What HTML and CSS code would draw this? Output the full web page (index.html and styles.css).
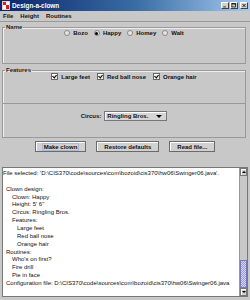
FILE: index.html
```html
<!DOCTYPE html>
<html lang="en">
<head>
  <meta charset="UTF-8">
  <title>Design-a-clown</title>
  <link rel="stylesheet" href="styles.css">
</head>
<body>
  <div class="window">
    <!-- Title bar -->
    <div class="titlebar">
      <svg class="app-icon" width="8" height="9" viewBox="0 0 8 9">
        <rect x="0" y="0" width="8" height="9" fill="#f2c8c8"/>
        <rect x="1" y="1" width="3" height="3" fill="#d02020"/>
        <rect x="4" y="4" width="3" height="4" fill="#d02020"/>
        <rect x="4" y="1" width="3" height="3" fill="#ffffff"/>
        <rect x="1" y="4" width="3" height="4" fill="#ffffff"/>
      </svg>
      <span class="title">Design-a-clown</span>
      <div class="title-buttons">
        <span class="tbtn">
          <svg width="7" height="7" viewBox="0 0 7 7"><rect x="1" y="5" width="4" height="1" fill="#000"/></svg>
        </span>
        <span class="tbtn">
          <svg width="7" height="7" viewBox="0 0 7 7"><rect x="1" y="1" width="5" height="5" fill="none" stroke="#000" stroke-width="1" transform="translate(-0.5,-0.5)"/><rect x="1" y="1" width="5" height="1" fill="#000"/></svg>
        </span>
        <span class="tbtn close">
          <svg width="7" height="7" viewBox="0 0 7 7"><path d="M1.5 1.5 L5.5 5.5 M5.5 1.5 L1.5 5.5" stroke="#000" stroke-width="1.2"/></svg>
        </span>
      </div>
    </div>

    <!-- Menu bar -->
    <div class="menubar">
      <span>File</span>
      <span>Height</span>
      <span>Routines</span>
    </div>

    <div class="content">
      <fieldset class="group name-group">
        <legend>Name</legend>
        <div class="options">
          <label class="option"><span class="radio"></span>Bozo</label>
          <label class="option"><span class="radio on"></span>Happy</label>
          <label class="option"><span class="radio"></span>Homey</label>
          <label class="option"><span class="radio"></span>Walt</label>
        </div>
      </fieldset>

      <fieldset class="group features-group">
        <legend>Features</legend>
        <div class="options">
          <label class="option"><span class="check"></span>Large feet</label>
          <label class="option"><span class="check"></span>Red ball nose</label>
          <label class="option"><span class="check"></span>Orange hair</label>
        </div>
      </fieldset>

      <div class="circus-panel">
        <span class="circus-label">Circus:</span>
        <div class="combo">
          <span>Ringling Bros.</span>
          <span class="combo-arrow"></span>
        </div>
      </div>

      <div class="button-row">
        <button class="btn focused"><span>Make clown</span></button>
        <button class="btn"><span>Restore defaults</span></button>
        <button class="btn"><span>Read file...</span></button>
      </div>

      <div class="output">
        <div class="log">
          <div class="line">File selected: 'D:\CIS370\code\sources\com\bozoid\cis370\hw06\Swinger06.java'.</div>
          <div class="line">&nbsp;</div>
          <div class="line l0">Clown design:</div>
          <div class="line l1">Clown: Happy</div>
          <div class="line l1">Height: 5' 6"</div>
          <div class="line l1">Circus: Ringling Bros.</div>
          <div class="line l1">Features:</div>
          <div class="line l2">Large feet</div>
          <div class="line l2">Red ball nose</div>
          <div class="line l2">Orange hair</div>
          <div class="line l0">Routines:</div>
          <div class="line l1">Who's on first?</div>
          <div class="line l1">Fire drill</div>
          <div class="line l1">Pie in face</div>
          <div class="line l0">Configuration file: D:\CIS370\code\sources\com\bozoid\cis370\hw06\Swinger06.java</div>
        </div>
        <div class="scrollbar">
          <span class="sb-btn up"></span>
          <div class="sb-track"><span class="sb-thumb"></span></div>
          <span class="sb-btn down"></span>
        </div>
      </div>
    </div>
  </div>
</body>
</html>
```

FILE: styles.css
```css
* {
  margin: 0;
  padding: 0;
  box-sizing: border-box;
  font-family: 'Liberation Sans', Arial, sans-serif;
}

body {
  width: 250px;
  height: 300px;
  background: #c8c8c8;
  overflow: hidden;
}

.window {
  height: 300px;
  display: flex;
  flex-direction: column;
}

/* Title bar */
.titlebar {
  height: 12px;
  display: flex;
  align-items: center;
  padding: 0 2px 0 2px;
  background: linear-gradient(to right, #0a246a, #3a6ea5 55%, #a6caf0);
}

.app-icon {
  margin-right: 2px;
}

.title {
  color: white;
  font-size: 6.4px;
  font-weight: bold;
}

.title-buttons {
  margin-left: auto;
  display: flex;
  gap: 1px;
}

.tbtn {
  width: 8px;
  height: 7px;
  background: #d4d0c8;
  border: 1px solid;
  border-color: #fff #404040 #404040 #fff;
  display: flex;
  align-items: center;
  justify-content: center;
}

.tbtn svg {
  width: 6px;
  height: 5px;
}

.tbtn.close {
  margin-left: 1px;
}

/* Menu bar */
.menubar {
  height: 11px;
  display: flex;
  align-items: center;
  gap: 7px;
  padding-left: 3px;
  font-size: 6px;
  font-weight: bold;
  color: #111;
  border-bottom: 1px solid #999;
}

.content {
  flex: 1;
  display: flex;
  flex-direction: column;
  padding: 0 2px 3px 2px;
}

/* Titled groups */
.group {
  border: 1px solid #9a9a9a;
  box-shadow: inset 1px 1px 0 #eee;
  margin-right: 2px;
  padding: 0;
}

.group legend {
  font-size: 6px;
  line-height: 6px;
  font-weight: bold;
  color: #222;
  margin-left: 2px;
  padding: 0 1px;
}

.name-group {
  margin-top: 2px;
  height: 40px;
}

.features-group {
  margin-top: 3px;
  height: 37px;
}

.options {
  height: 100%;
  display: flex;
  justify-content: center;
  align-items: center;
  gap: 6px;
  padding-bottom: 4px;
}

.features-group .options {
  gap: 7px;
  padding-bottom: 3px;
}

.option {
  display: flex;
  align-items: center;
  gap: 3px;
  font-size: 6px;
  font-weight: bold;
  color: #111;
}

.radio {
  width: 6px;
  height: 6px;
  border-radius: 50%;
  border: 1px solid #888;
  background: #e6e6e6;
  display: flex;
  align-items: center;
  justify-content: center;
}

.radio.on::after {
  content: "";
  width: 3px;
  height: 3px;
  border-radius: 50%;
  background: #000;
}

.check {
  width: 7px;
  height: 7px;
  border: 1px solid #666;
  box-shadow: inset 1px 1px 0 #fff;
  background: #ececec;
  position: relative;
}

.check::after {
  content: "";
  position: absolute;
  left: 1px;
  top: 0;
  width: 2px;
  height: 3px;
  border: solid #000;
  border-width: 0 1px 1px 0;
  transform: rotate(40deg);
}

/* Circus row */
.circus-panel {
  height: 34px;
  margin-right: 2px;
  border: 1px solid #9a9a9a;
  border-top: none;
  box-shadow: inset 1px 0 0 #eee;
  display: flex;
  justify-content: center;
  align-items: flex-start;
  padding-top: 7px;
  gap: 3px;
}

.circus-label {
  font-size: 6px;
  font-weight: bold;
  color: #111;
  line-height: 10px;
}

.combo {
  width: 63px;
  height: 10px;
  border: 1px solid #777;
  box-shadow: inset 1px 1px 0 #fff;
  background: #d6d6d6;
  display: flex;
  align-items: center;
  padding-left: 2px;
  font-size: 6px;
  font-weight: bold;
  color: #111;
}

.combo-arrow {
  margin-left: auto;
  margin-right: 4px;
  width: 0;
  height: 0;
  border-left: 3px solid transparent;
  border-right: 3px solid transparent;
  border-top: 3px solid #000;
}

/* Buttons */
.button-row {
  display: flex;
  justify-content: center;
  gap: 10px;
  margin-top: 3px;
}

.btn {
  height: 11px;
  padding: 0 7px;
  background: #d0d0d0;
  border: 1px solid #6a6a6a;
  box-shadow: inset 1px 1px 0 #fff;
  font-size: 6px;
  font-weight: bold;
  color: #111;
  display: flex;
  align-items: center;
}

.btn.focused span {
  outline: 1px solid #a8b8d8;
  outline-offset: 0;
  padding: 0 1px;
}

/* Output area */
.output {
  margin-top: 15px;
  height: 130px;
  border: 1px solid #777;
  background: white;
  display: flex;
  overflow: hidden;
}

.log {
  flex: 1;
  overflow: hidden;
  padding-top: 2px;
  font-size: 6px;
  line-height: 7.86px;
  color: #111;
  white-space: nowrap;
}

.line {
  padding-left: 0;
}

.l0 {
  padding-left: 3px;
}

.l1 {
  padding-left: 9px;
}

.l2 {
  padding-left: 14px;
}

.scrollbar {
  width: 8px;
  display: flex;
  flex-direction: column;
  background: #c8c8c8;
  border-left: 1px solid #999;
}

.sb-btn {
  height: 8px;
  background: #d0d0d0;
  border: 1px solid #777;
  box-shadow: inset 1px 1px 0 #fff;
  display: flex;
  align-items: center;
  justify-content: center;
}

.sb-btn::after {
  content: "";
  width: 0;
  height: 0;
  border-left: 2px solid transparent;
  border-right: 2px solid transparent;
}

.sb-btn.up::after {
  border-bottom: 2px solid #000;
}

.sb-btn.down::after {
  border-top: 2px solid #000;
}

.sb-track {
  flex: 1;
  display: flex;
  flex-direction: column;
  justify-content: flex-end;
}

.sb-thumb {
  height: 28px;
  border: 1px solid #7878b8;
  background: repeating-conic-gradient(#9c9cd8 0 25%, #d4d4f4 0 50%) 0 0 / 2px 2px;
}
```
